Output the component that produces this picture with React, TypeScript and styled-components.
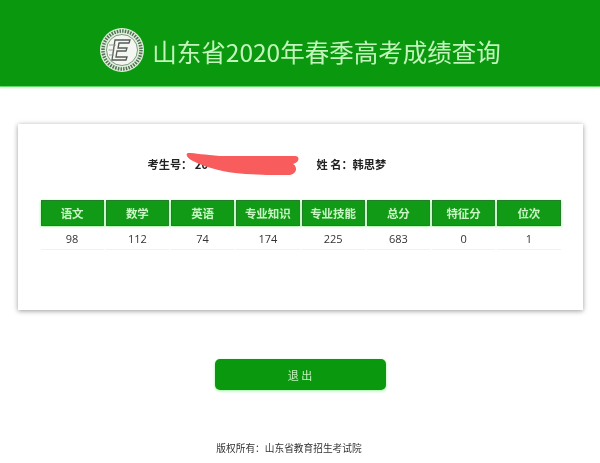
import styled, { createGlobalStyle } from "styled-components";

const GlobalStyle = createGlobalStyle`
  html, body { margin: 0; padding: 0; background: #fff; }
  body { font-family: "Noto Sans CJK SC", "Noto Sans", sans-serif; }
`;

const Page = styled.div`
  width: 600px;
  height: 463px;
  overflow: hidden;
  display: flex;
  flex-direction: column;
  align-items: center;
  filter: blur(0.35px);
`;

const Header = styled.header`
  width: 100%;
  height: 87px;
  flex: none;
  background: #0a980f;
  border-bottom: 1px solid #5fdc63;
  box-sizing: border-box;
  box-shadow: 0 1px 3px #d6f8d6;
  display: flex;
  align-items: center;
  justify-content: center;
  gap: 7px;
  padding: 14px 0 0 0;
`;

const Title = styled.h1`
  margin: 5px 0 0 0;
  font-size: 24.5px;
  font-weight: 400;
  line-height: 1;
  color: #c3f4bc;
  white-space: nowrap;
`;

const Card = styled.section`
  width: 565px;
  height: 186px;
  flex: none;
  margin-top: 37px;
  background: #fff;
  box-sizing: border-box;
  padding: 0 22px 0 23px;
  box-shadow: 0 1px 5px rgba(0, 0, 0, 0.4);
`;

const InfoRow = styled.div`
  position: relative;
  height: 76px;
  display: flex;
  align-items: center;
  padding: 4px 0 0 107px;
  box-sizing: border-box;
  font-size: 11.2px;
  font-weight: 700;
  color: #222;
`;

const NumberField = styled.span`
  width: 169px;
  white-space: pre;
`;

const Scribble = styled.svg`
  position: absolute;
  left: 144px;
  top: 26px;
`;

const ScoreTable = styled.div`
  display: grid;
  grid-template-columns: repeat(8, 1fr);
  column-gap: 2px;
  width: 520px;
`;

const HeadCell = styled.div`
  height: 26px;
  background: #119a16;
  border: 1px solid #237f27;
  box-sizing: border-box;
  box-shadow: 0 1px 3px #8df08d;
  color: #c9f5c4;
  font-size: 11.5px;
  font-weight: 700;
  display: flex;
  align-items: center;
  justify-content: center;
  white-space: nowrap;
`;

const ValueCell = styled.div`
  height: 22px;
  margin-top: 1px;
  background: #fff;
  border-bottom: 1px solid #f1f1f1;
  color: #333;
  font-family: "Open Sans", "Noto Sans", sans-serif;
  font-size: 11px;
  display: flex;
  align-items: center;
  justify-content: center;
`;

const ExitButton = styled.button`
  width: 171px;
  height: 31px;
  flex: none;
  margin-top: 49px;
  border: none;
  border-radius: 5px;
  background: #0a980f;
  box-shadow: 0 1px 3px #9cf09c;
  color: #c3f4bc;
  font-family: inherit;
  font-size: 11px;
  padding: 0;
`;

const Footer = styled.footer`
  margin-top: 51px;
  padding-right: 22px;
  font-size: 9.7px;
  line-height: 14px;
  color: #333;
  white-space: nowrap;
`;

const headers = ["语文", "数学", "英语", "专业知识", "专业技能", "总分", "特征分", "位次"];
const scores = [98, 112, 74, 174, 225, 683, 0, 1];

function Logo() {
  return (
    <svg width="46" height="46" viewBox="0 0 46 46">
      <circle cx="23" cy="23" r="22" fill="#dff0d8" />
      <circle cx="23" cy="23" r="19" fill="none" stroke="#55705a" strokeWidth="3.5" strokeDasharray="1.5 1.2" />
      <circle cx="23" cy="23" r="15.5" fill="#f4f7f1" stroke="#7f9a80" strokeWidth="1" />
      <path d="M16 13h15l-1 3h-10l-1 5h9l-1 3h-9l-1 6h11l-1 3h-14z" fill="#f7f7f4" stroke="#555b55" strokeWidth="1.3" />
      <path d="M10 18h7M9.500 23h6M10 28h5" stroke="#8a948a" strokeWidth="0.9" />
    </svg>
  );
}

export default function App() {
  return (
    <>
      <GlobalStyle />
      <Page>
        <Header>
          <Logo />
          <Title>山东省2020年春季高考成绩查询</Title>
        </Header>
        <Card>
          <InfoRow>
            <NumberField>考生号： 20</NumberField>
            <span>姓 名：韩思梦</span>
            <Scribble width="116" height="28" viewBox="0 0 116 28">
              <path
                d="M3 3C10 3 20 5 35 6L110 6C115 6 115 12 108 14C112 16 113 23 105 25C90 25 65 25 50 23C35 21 20 17 8 11C2 8 0 4 3 3Z"
                fill="#f95c5c"
              />
            </Scribble>
          </InfoRow>
          <ScoreTable>
            {headers.map((h) => (
              <HeadCell key={h}>{h}</HeadCell>
            ))}
            {scores.map((s, i) => (
              <ValueCell key={i}>{s}</ValueCell>
            ))}
          </ScoreTable>
        </Card>
        <ExitButton>退 出</ExitButton>
        <Footer>版权所有：山东省教育招生考试院</Footer>
      </Page>
    </>
  );
}
